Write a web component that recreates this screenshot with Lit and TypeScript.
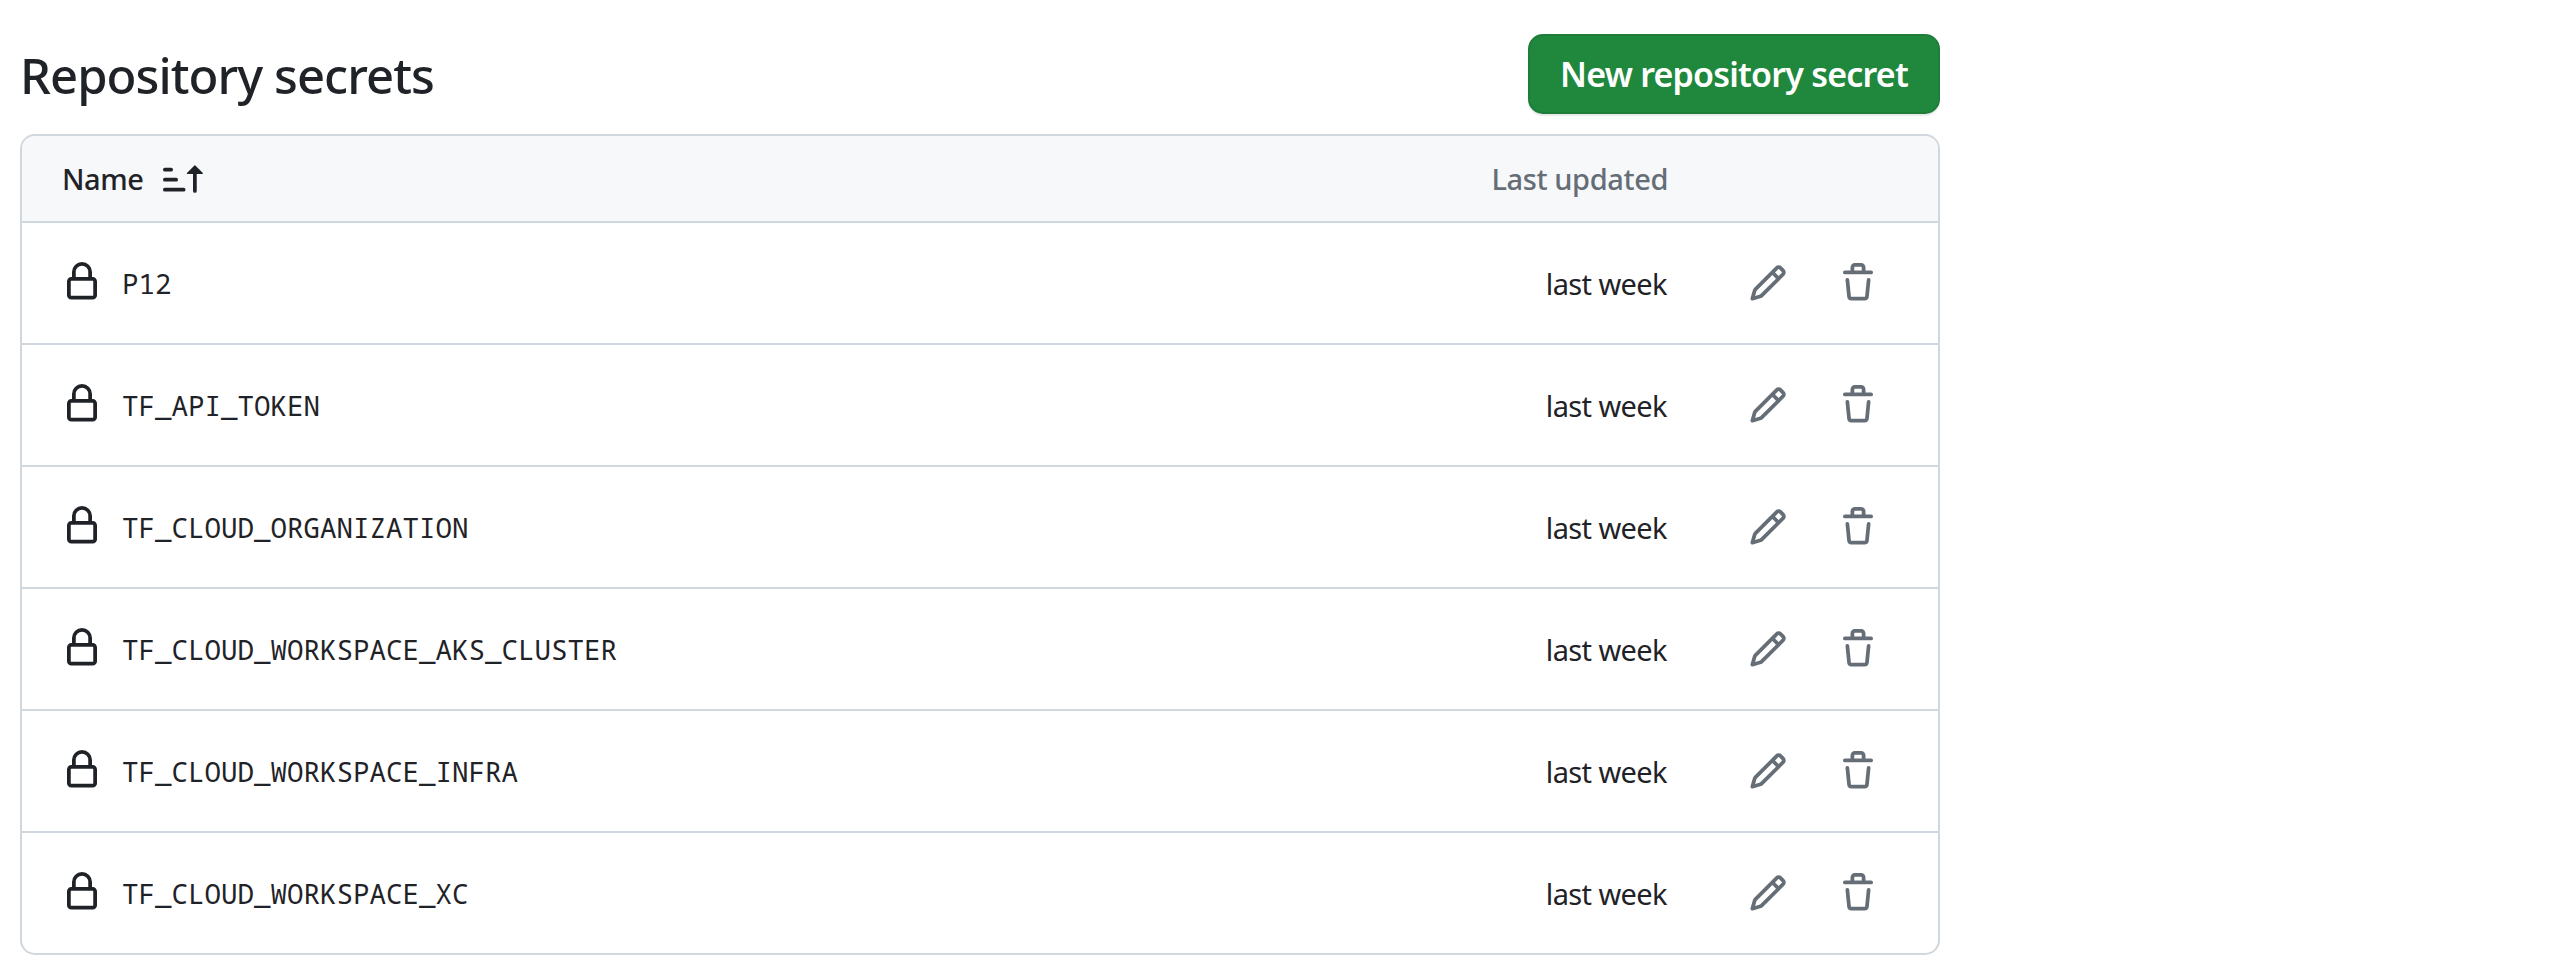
import { LitElement, html, css, svg } from "lit";
import { customElement, property } from "lit/decorators.js";

const ICONS: Record<string, string> = {
  lock: "M4 4a4 4 0 0 1 8 0v2h.25c.966 0 1.75.784 1.75 1.75v5.5A1.75 1.75 0 0 1 12.25 15h-8.5A1.75 1.75 0 0 1 2 13.25v-5.5C2 6.784 2.784 6 3.75 6H4Zm8.25 3.5h-8.5a.25.25 0 0 0-.25.25v5.5c0 .138.112.25.25.25h8.5a.25.25 0 0 0 .25-.25v-5.5a.25.25 0 0 0-.25-.25ZM10.5 6V4a2.5 2.5 0 1 0-5 0v2Z",
  pencil: "M11.013 1.427a1.75 1.75 0 0 1 2.474 0l1.086 1.086a1.75 1.75 0 0 1 0 2.474l-8.61 8.61c-.21.21-.47.364-.756.445l-3.251.93a.75.75 0 0 1-.927-.928l.929-3.25c.081-.286.235-.547.445-.758l8.61-8.61Zm.176 4.823L9.75 4.81l-6.286 6.287a.253.253 0 0 0-.064.108l-.558 1.953 1.953-.558a.253.253 0 0 0 .108-.064Zm1.238-3.763a.25.25 0 0 0-.354 0L10.811 3.75l1.439 1.44 1.263-1.263a.25.25 0 0 0 0-.354Z",
  trash: "M11 1.75V3h2.25a.75.75 0 0 1 0 1.5H2.75a.75.75 0 0 1 0-1.5H5V1.75C5 .784 5.784 0 6.75 0h2.5C10.216 0 11 .784 11 1.75ZM4.496 6.675l.66 6.6a.25.25 0 0 0 .249.225h5.19a.25.25 0 0 0 .249-.225l.66-6.6a.75.75 0 0 1 1.492.149l-.66 6.6A1.748 1.748 0 0 1 10.595 15h-5.19a1.75 1.75 0 0 1-1.741-1.575l-.66-6.6a.75.75 0 1 1 1.492-.15ZM6.5 1.75V3h3V1.75a.25.25 0 0 0-.25-.25h-2.5a.25.25 0 0 0-.25.25Z",
  sort: "m12.927 2.573 3 3A.25.25 0 0 1 15.75 6H13.5v6.75a.75.75 0 0 1-1.5 0V6H9.75a.25.25 0 0 1-.177-.427l3-3a.25.25 0 0 1 .354 0ZM0 12.25a.75.75 0 0 1 .75-.75h7.5a.75.75 0 0 1 0 1.5H.75a.75.75 0 0 1-.75-.75Zm0-4a.75.75 0 0 1 .75-.75h4.5a.75.75 0 0 1 0 1.5H.75A.75.75 0 0 1 0 8.25Zm0-4a.75.75 0 0 1 .75-.75h2.5a.75.75 0 0 1 0 1.5H.75A.75.75 0 0 1 0 4.25Z",
};

@customElement("oct-icon")
export class OctIcon extends LitElement {
  @property() name = "lock";
  static styles = css`
    :host { display: block; width: 40px; height: 40px; flex: none; }
    svg { display: block; width: 100%; height: 100%; fill: currentColor; }
  `;
  render() {
    return html`<svg viewBox="0 0 16 16" aria-hidden="true">${svg`<path d=${ICONS[this.name]}></path>`}</svg>`;
  }
}

@customElement("app-root")
export class AppRoot extends LitElement {
  static styles = css`
    :host {
      display: block;
      min-height: 967px;
      background: #fff;
      color: #1f2328;
      font-family: "Noto Sans", "Open Sans", sans-serif;
      font-size: 29px;
    }
    .page { width: 1920px; padding: 34px 0 0 20px; }
    .top {
      display: flex;
      align-items: center;
      justify-content: space-between;
      height: 80px;
      margin-bottom: 20px;
    }
    h2 { margin: 0; padding-top: 2px; font-size: 49px; font-weight: 500; line-height: 80px; letter-spacing: -0.95px; }
    button {
      box-sizing: border-box;
      width: 412px;
      height: 80px;
      padding: 0;
      border: 2px solid #1f7d3a;
      border-radius: 15px;
      background: #1f883d;
      box-shadow: 0 2px 1px rgba(31, 35, 40, 0.1);
      color: #fff;
      font: 600 34px "Noto Sans", "Open Sans", sans-serif;
      letter-spacing: -0.78px;
    }
    .box { border: 2px solid #d0d7de; border-radius: 15px; overflow: hidden; }
    .head, .row { display: flex; align-items: center; }
    .head {
      height: 85px;
      background: #f6f8fa;
      padding: 0 60px 0 40px;
      font-weight: 500;
    }
    .name { flex: 1; display: flex; align-items: center; }
    .head .name { gap: 19.4px; letter-spacing: -0.4px; }
    .head .date { color: #656d76; letter-spacing: -0.4px; margin-right: 210px; }
    .head oct-icon { margin-top: 1px; }
    .row { height: 120px; padding: 0 60px 0 40px; border-top: 2px solid #d0d7de; }
    .row .name { gap: 20px; }
    .row .name oct-icon { margin-top: -3px; }
    code { font-family: "Noto Sans Mono", "DejaVu Sans Mono", monospace; font-size: 27.5px; padding-top: 1px; }
    .row .date { letter-spacing: -0.6px; margin-right: 81px; }
    .actions { display: flex; gap: 50px; color: #656d76; margin-top: -1px; }
  `;
  private secrets = [
    "P12",
    "TF_API_TOKEN",
    "TF_CLOUD_ORGANIZATION",
    "TF_CLOUD_WORKSPACE_AKS_CLUSTER",
    "TF_CLOUD_WORKSPACE_INFRA",
    "TF_CLOUD_WORKSPACE_XC",
  ];
  render() {
    return html`
      <div class="page">
        <div class="top"><h2>Repository secrets</h2><button>New repository secret</button></div>
        <div class="box">
          <div class="head">
            <div class="name"><span>Name</span><oct-icon name="sort"></oct-icon></div>
            <span class="date">Last updated</span>
          </div>
          ${this.secrets.map(
            (s) => html`<div class="row">
              <div class="name"><oct-icon name="lock"></oct-icon><code>${s}</code></div>
              <span class="date">last week</span>
              <div class="actions"><oct-icon name="pencil"></oct-icon><oct-icon name="trash"></oct-icon></div>
            </div>`
          )}
        </div>
      </div>
    `;
  }
}
